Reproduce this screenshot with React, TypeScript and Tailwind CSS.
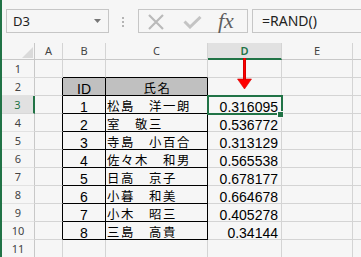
import React from "react";

const names = [
  "松島　洋一朗",
  "室　敬三",
  "寺島　小百合",
  "佐々木　和男",
  "日高　京子",
  "小暮　和美",
  "小木　昭三",
  "三島　高貴",
];
const vals = [
  "0.316095",
  "0.536772",
  "0.313129",
  "0.565538",
  "0.678177",
  "0.664678",
  "0.405278",
  "0.34144",
];

const cjk = "font-['Noto_Sans_CJK_JP',sans-serif] text-[12.4px] tracking-[1.6px] leading-[14px] text-black";
const num = "font-['Liberation_Sans',sans-serif] text-[14px] leading-[12px] text-black";

function Row({ r }: { r: number }) {
  const inTable = r >= 2 && r <= 10;
  const tableTopOrIn = r >= 1 && r <= 10;
  const idx = r - 3;
  const hasData = r >= 3 && r <= 10;
  const selectedRow = r === 3;
  return (
    <>
      <div
        className={
          selectedRow
            ? "bg-[#e1e1e1] border-r-2 border-r-[#217346] border-b border-b-[#d8d8d8] flex items-center justify-center pt-[2px] text-[11px] text-[#217346]"
            : "border-r border-r-[#c8c8c8] border-b border-b-[#e2e2e2] flex items-center justify-center pt-[2px] text-[11px] text-[#444]"
        }
      >
        {r}
      </div>
      <div
        className={
          inTable
            ? "border-r border-r-black border-b border-b-[#d4d4d4]"
            : "border-r border-r-[#d4d4d4] border-b border-b-[#d4d4d4]"
        }
      />
      <div
        className={
          (inTable ? "border-r border-r-black " : "border-r border-r-[#d4d4d4] ") +
          (tableTopOrIn ? "border-b border-b-black " : "border-b border-b-[#d4d4d4] ") +
          (r === 2 ? "bg-[#c0c0c0] " : "") +
          "flex items-end justify-center " +
          num
        }
      >
        {r === 2 ? "ID" : hasData ? String(idx + 1) : ""}
      </div>
      <div
        className={
          (inTable ? "border-r border-r-black " : "border-r border-r-[#d4d4d4] ") +
          (tableTopOrIn ? "border-b border-b-black " : "border-b border-b-[#d4d4d4] ") +
          (r === 2 ? "bg-[#c0c0c0] justify-center pl-[2px] " : "justify-start pl-[1px] ") +
          "flex items-end whitespace-nowrap " +
          cjk
        }
      >
        {r === 2 ? "氏名" : hasData ? names[idx] : ""}
      </div>
      <div
        className={
          "relative border-r border-r-[#d4d4d4] border-b border-b-[#d4d4d4] flex items-end justify-end pr-[3px] " +
          num
        }
      >
        {hasData ? vals[idx] : ""}
        {r === 1 && (
          <svg
            className="absolute left-[29px] -top-[2px] z-10 overflow-visible"
            width="15"
            height="32"
            viewBox="0 0 15 32"
          >
            <rect x="6" y="0" width="3" height="23" fill="#ff0000" />
            <path d="M0.5 21 L14.5 21 L7.5 31 Z" fill="#ff0000" stroke="#d40000" strokeWidth="0.6" />
            <rect x="6" y="0" width="0.7" height="22" fill="#c80000" />
            <rect x="8.3" y="0" width="0.7" height="22" fill="#c80000" />
          </svg>
        )}
        {selectedRow && (
          <>
            <div className="absolute -left-[1px] -top-[1px] w-[76px] h-[20px] border-2 border-[#217346] z-10" />
            <div className="absolute left-[69px] top-[15px] w-[7px] h-[7px] bg-[#f6f6f6] z-20 flex items-center justify-center">
              <div className="w-[5px] h-[5px] bg-[#217346]" />
            </div>
          </>
        )}
      </div>
      <div className="border-r border-r-[#d4d4d4] border-b border-b-[#d4d4d4]" />
      <div className="border-b border-b-[#d4d4d4]" />
    </>
  );
}

export default function App() {
  const rows = [1, 2, 3, 4, 5, 6, 7, 8, 9, 10, 11];
  return (
    <div className="w-[361px] h-[257px] overflow-hidden bg-[#f6f6f6] border-l-2 border-l-[#217346] flex flex-col font-['Noto_Sans',sans-serif]">
      {/* formula bar */}
      <div className="h-[43px] shrink-0 flex items-start pt-[9px]">
        <div className="ml-[4px] w-[103px] h-[24px] border border-[#c6c6c6] flex items-center justify-between pl-[6px] pr-[7px]">
          <span className="text-[13px] text-[#222] leading-none">D3</span>
          <svg width="7" height="4" viewBox="0 0 7 4">
            <path d="M0 0 L7 0 L3.5 4 Z" fill="#767676" />
          </svg>
        </div>
        <div className="ml-[13px] mt-[8px] flex flex-col gap-[2px]">
          <div className="w-[2px] h-[2px] bg-[#b4b4b4]" />
          <div className="w-[2px] h-[2px] bg-[#b4b4b4]" />
          <div className="w-[2px] h-[2px] bg-[#b4b4b4]" />
        </div>
        <div className="ml-[14px] w-[110px] h-[24px] border border-[#c6c6c6] flex items-center">
          <svg className="ml-[8px] mt-[1px]" width="18" height="16" viewBox="0 0 18 16">
            <path d="M2 1 L16 15 M16 1 L2 15" stroke="#bababa" strokeWidth="2.2" />
          </svg>
          <svg className="ml-[18px] mt-[3px]" width="19" height="13" viewBox="0 0 19 13">
            <path d="M1.5 5.5 L7 11 L17.5 1" stroke="#c4c4c4" strokeWidth="3" fill="none" />
          </svg>
          <span className="ml-[16px] font-['Liberation_Serif',serif] italic text-[22px] leading-none text-[#5f5f5f]">
            fx
          </span>
        </div>
        <div className="ml-[4px] flex-1 h-[24px] border border-r-0 border-[#c6c6c6] flex items-center pl-[9px]">
          <span className="text-[14px] text-[#222] leading-none">=RAND()</span>
        </div>
      </div>
      {/* grid */}
      <div className="grid grid-cols-[33px_28px_43px_102px_74px_71px_8px] grid-rows-[17px_repeat(11,18px)]">
        <div className="border-r border-r-[#c8c8c8] border-b border-b-[#c8c8c8] flex items-end justify-end pr-[1px] pb-[1px]">
          <svg width="11" height="11" viewBox="0 0 11 11">
            <path d="M11 0 L11 11 L0 11 Z" fill="#dadada" />
          </svg>
        </div>
        <div className="border-r border-r-[#d4d4d4] border-b border-b-[#c8c8c8] flex items-center justify-center text-[11px] text-[#444]">A</div>
        <div className="border-r border-r-[#d4d4d4] border-b border-b-[#c8c8c8] flex items-center justify-center text-[11px] text-[#444]">B</div>
        <div className="border-r border-r-[#d4d4d4] border-b border-b-[#c8c8c8] flex items-center justify-center text-[11px] text-[#444]">C</div>
        <div className="bg-[#e1e1e1] border-r border-r-[#d4d4d4] border-b-2 border-b-[#217346] flex items-center justify-center pt-[1px] text-[11px] font-semibold text-[#217346]">D</div>
        <div className="border-r border-r-[#d4d4d4] border-b border-b-[#c8c8c8] flex items-center justify-center text-[11px] text-[#444]">E</div>
        <div className="border-b border-b-[#c8c8c8]" />
        {rows.map((r) => (
          <Row key={r} r={r} />
        ))}
      </div>
    </div>
  );
}
